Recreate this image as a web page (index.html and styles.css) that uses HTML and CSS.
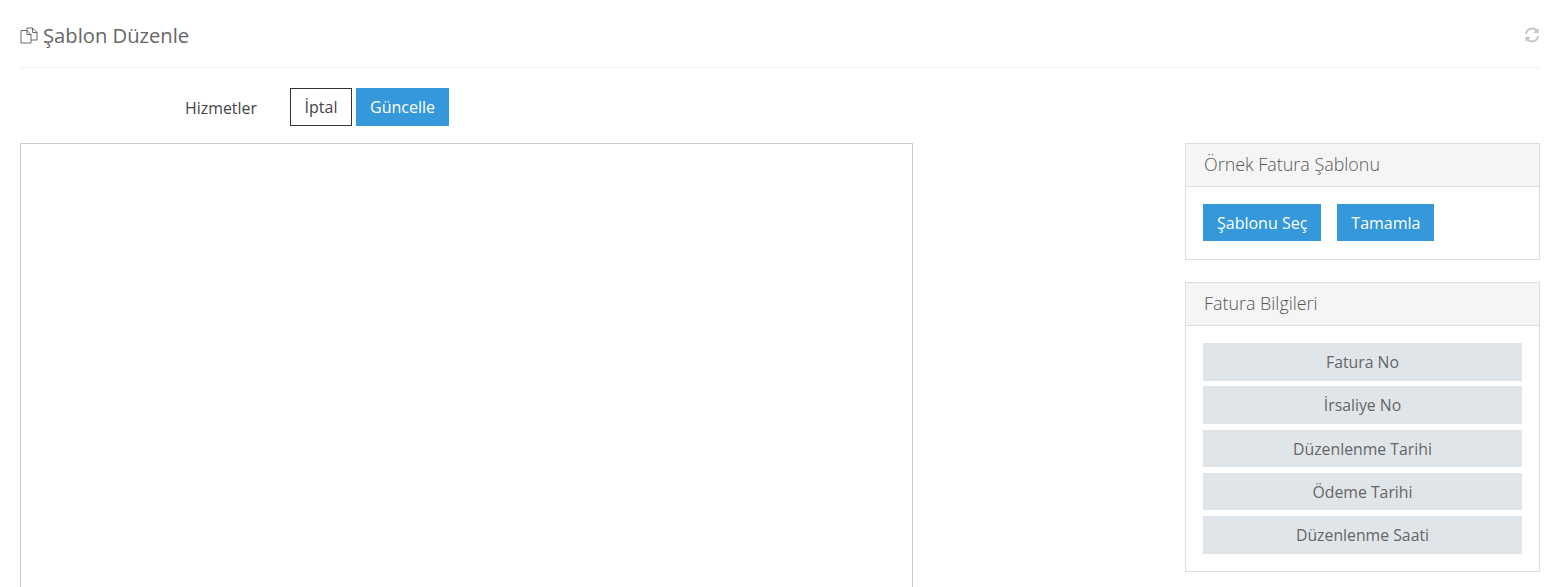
FILE: index.html
```html
<!DOCTYPE html>
<html lang="tr">
<head>
  <meta charset="UTF-8" />
  <meta name="viewport" content="width=device-width, initial-scale=1.0" />
  <title>Şablon Düzenle</title>
  <link rel="stylesheet" href="styles.css">
</head>
<body>
<div class="page">
  <div class="page-header">
    <h1 class="page-title">
      <svg class="title-icon" width="18" height="17" viewBox="0 0 18 17" fill="none" stroke="#666" stroke-width="1">
        <path d="M1 3.5 H7 L11 7.5 V16 H1 Z" />
        <path d="M7 3.5 V7.5 H11" />
        <path d="M7 3.5 V1 H12.5 L17 5.5 V13 H11" />
        <path d="M12.5 1 V5.5 H17" />
      </svg>
      Şablon Düzenle
    </h1>
    <svg class="refresh-icon" width="16" height="16" viewBox="0 0 16 16" fill="none" stroke="#c4c4c4" stroke-width="2">
      <path d="M2 7 A6 6 0 0 1 12.5 3.6" />
      <path d="M14 9 A6 6 0 0 1 3.5 12.4" />
      <path d="M14.5 1 V6 H9.5 Z" fill="#c4c4c4" stroke="none" />
      <path d="M1.5 15 V10 H6.5 Z" fill="#c4c4c4" stroke="none" />
    </svg>
  </div>

  <div class="toolbar">
    <span class="toolbar-label">Hizmetler</span>
    <button class="btn btn-outline">İptal</button>
    <button class="btn btn-primary">Güncelle</button>
  </div>

  <div class="content">
    <div class="editor"></div>
    <div class="sidebar">
      <div class="panel">
        <div class="panel-heading">Örnek Fatura Şablonu</div>
        <div class="panel-body panel-actions">
          <button class="btn btn-primary">Şablonu Seç</button>
          <button class="btn btn-primary">Tamamla</button>
        </div>
      </div>
      <div class="panel">
        <div class="panel-heading">Fatura Bilgileri</div>
        <div class="panel-body field-list">
          <div class="field">Fatura No</div>
          <div class="field">İrsaliye No</div>
          <div class="field">Düzenlenme Tarihi</div>
          <div class="field">Ödeme Tarihi</div>
          <div class="field">Düzenlenme Saati</div>
        </div>
      </div>
    </div>
  </div>
</div>
</body>
</html>
```

FILE: styles.css
```css
body,
html {
  margin: 0;
  padding: 0;
  height: 100%;
  overflow: hidden;
  background-color: #fff;
  font-family: "Open Sans", sans-serif;
  color: #555;
}
.page {
  padding: 0 14px 0 20px;
}
.page-header {
  display: flex;
  align-items: center;
  justify-content: space-between;
  height: 68px;
  padding-top: 3px;
  box-sizing: border-box;
  border-bottom: 1px solid #f0f0f0;
}
.page-title {
  display: flex;
  align-items: center;
  gap: 5px;
  margin: 0;
  font-size: 20.2px;
  font-weight: 400;
  color: #666;
}
.toolbar {
  display: flex;
  align-items: center;
  margin-top: 20px;
  padding-left: 165px;
}
.toolbar-label {
  width: 105px;
  padding-top: 1px;
  font-size: 15.9px;
  color: #444;
}
.btn {
  height: 38px;
  padding: 0 14px;
  border: none;
  border-radius: 0;
  font-family: inherit;
  font-size: 16px;
  box-sizing: border-box;
}
.btn-outline {
  width: 62px;
  margin-right: 4px;
  padding: 0;
  background-color: #fff;
  border: 1px solid #333;
  color: #444;
}
.btn-primary {
  background-color: #3498db;
  color: #fff;
}
.panel-actions .btn {
  height: 37px;
}
.content {
  display: flex;
  justify-content: space-between;
  margin-top: 17px;
}
.editor {
  width: 893px;
  height: 600px;
  box-sizing: border-box;
  border: 1px solid #ccc;
}
.sidebar {
  display: flex;
  flex-direction: column;
  gap: 22px;
  width: 355px;
}
.panel {
  border: 1px solid #ddd;
}
.panel-heading {
  height: 42px;
  line-height: 40px;
  padding: 0 18px;
  background-color: #f5f5f5;
  border-bottom: 1px solid #ddd;
  font-size: 17.9px;
  font-weight: 300;
  color: #555;
}
.panel-body {
  padding: 17px;
}
.panel-actions {
  padding-bottom: 18px;
  display: flex;
  gap: 16px;
}
.field-list {
  display: flex;
  flex-direction: column;
  gap: 5.7px;
}
.field {
  height: 37.6px;
  line-height: 39px;
  text-align: center;
  background-color: #e0e5ea;
  font-size: 15.8px;
  color: #666;
}
```
